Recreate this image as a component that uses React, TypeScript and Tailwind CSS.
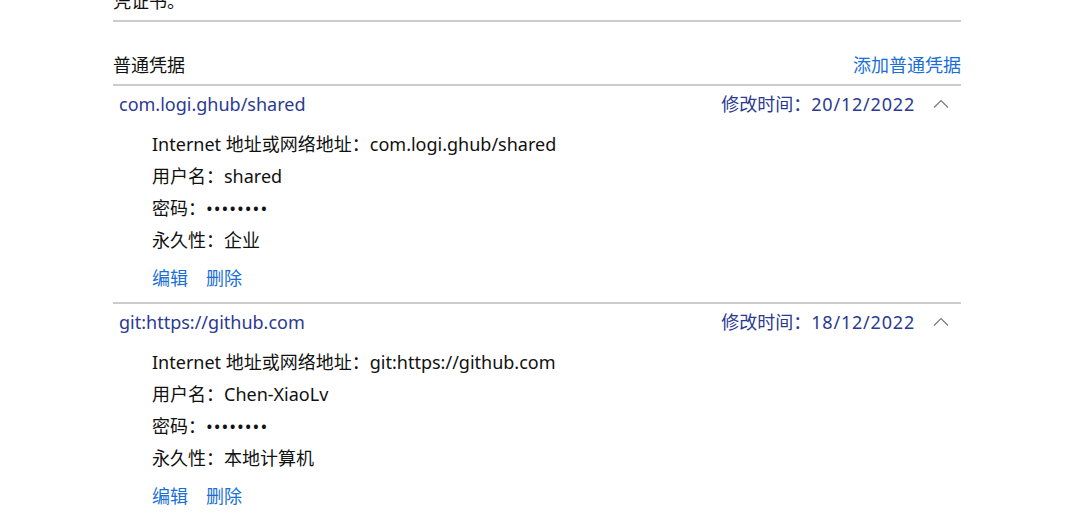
type Credential = {
  address: string;
  user: string;
  persistence: string;
  modified: string;
};

const credentials: Credential[] = [
  {
    address: "com.logi.ghub/shared",
    user: "shared",
    persistence: "企业",
    modified: "20/12/2022",
  },
  {
    address: "git:https://github.com",
    user: "Chen-XiaoLv",
    persistence: "本地计算机",
    modified: "18/12/2022",
  },
];

const Caret = () => (
  <svg width="16" height="10" viewBox="0 0 16 10" className="text-[#7a7a7a]">
    <polyline
      points="1,8.5 8,1.5 15,8.5"
      fill="none"
      stroke="currentColor"
      strokeWidth="1.2"
    />
  </svg>
);

const CredentialItem = ({ item }: { item: Credential }) => {
  return (
    <div className="border-b-2 border-[#cccccc] pb-[8px]">
      <div className="h-[36px] flex items-center pl-[6px] text-[#2b3a92]">
        <span>{item.address}</span>
        <span className="ml-auto">
          修改时间：<span className="tracking-[0.8px]">{item.modified}</span>
        </span>
        <span className="w-[46px] flex justify-center pl-[6px]">
          <Caret />
        </span>
      </div>
      <div className="pl-[39px] pt-[6px] text-[#111] leading-[32px]">
        <p>Internet 地址或网络地址：{item.address}</p>
        <p>用户名：{item.user}</p>
        <p>
          密码：<span className="tracking-[1px]">••••••••</span>
        </p>
        <p>永久性：{item.persistence}</p>
        <div className="flex gap-[18px] mt-[6px] text-[#1a6fd6]">
          <span>编辑</span>
          <span>删除</span>
        </div>
      </div>
    </div>
  );
};

export default function App() {
  return (
    <div
      className="w-[1075px] h-[516px] overflow-hidden bg-white text-[18px] leading-[24px]"
      style={{ fontFamily: '"Noto Sans", "Noto Sans CJK SC", sans-serif' }}
    >
      <div className="w-[848px] ml-[113px]">
        <div className="mt-[-11px] pb-[7px] border-b-2 border-[#cccccc] text-[#111]">
          凭证书。
        </div>
        <div className="flex items-center pt-[31px] pb-[7px] border-b-2 border-[#cccccc]">
          <span className="text-[#111]">普通凭据</span>
          <span className="ml-auto text-[#1a6fd6]">添加普通凭据</span>
        </div>
        {credentials.map((c) => (
          <CredentialItem key={c.address} item={c} />
        ))}
      </div>
    </div>
  );
}
